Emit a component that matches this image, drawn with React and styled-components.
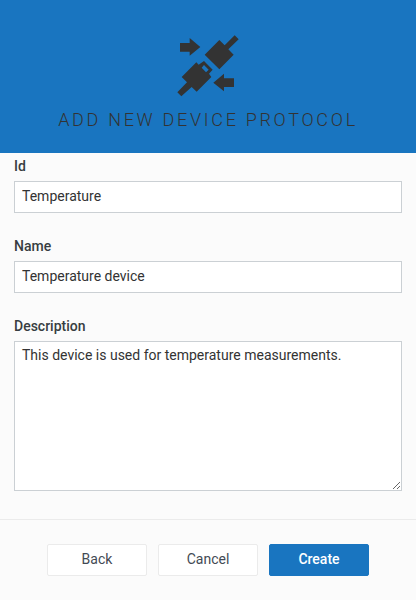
import React from "react";
import styled, { createGlobalStyle, css } from "styled-components";

const GlobalStyle = createGlobalStyle`
  *, *::before, *::after { box-sizing: border-box; }
  body {
    margin: 0;
    background: #fbfbfb;
    color: #373d41;
    font-family: Roboto, sans-serif;
    font-size: 14px;
    overflow: hidden;
  }
`;

const Dialog = styled.main`
  display: flex;
  flex-direction: column;
  height: 600px;
  background: #fbfbfb;
`;

const Header = styled.header`
  display: flex;
  flex-direction: column;
  align-items: center;
  height: 153px;
  padding-top: 28px;
  background: #1975c0;
`;

const ConnectorIcon = styled.svg`
  display: block;
  width: 80px;
  height: 75px;
  fill: #333;
`;

const Title = styled.h1`
  margin: 5px 0 0;
  font-size: 18px;
  font-weight: 300;
  line-height: 24px;
  letter-spacing: 2.7px;
  text-transform: uppercase;
  white-space: nowrap;
  color: #333;
`;

const Form = styled.form`
  display: flex;
  flex: 1;
  flex-direction: column;
  gap: 24px;
  padding: 4px 14px 0;
`;

const Field = styled.label`
  display: flex;
  flex-direction: column;
`;

const Label = styled.span`
  height: 24px;
  font-weight: 500;
  line-height: 18px;
`;

const control = css`
  display: block;
  width: 100%;
  margin: 0;
  padding: 4px 7px 6px;
  border: 1px solid #cbd0d4;
  border-radius: 0;
  outline: none;
  background: #fff;
  color: #333;
  font: 400 14px/20px Roboto, sans-serif;
`;

const Input = styled.input`
  ${control}
  height: 32px;
`;

const TextArea = styled.textarea`
  ${control}
  height: 150px;
  padding-top: 3px;
  resize: both;
`;

const Footer = styled.footer`
  display: flex;
  justify-content: center;
  gap: 11px;
  height: 81px;
  padding-top: 24px;
  border-top: 1px solid #ebebeb;
`;

const Button = styled.button`
  width: 100px;
  height: 32px;
  padding: 0 0 2px;
  border: 1px solid ${(p) => (p.$primary ? "#1975c0" : "#ebebeb")};
  border-radius: 2px;
  background: ${(p) => (p.$primary ? "#1975c0" : "#fff")};
  color: ${(p) => (p.$primary ? "#fff" : "#434a54")};
  font: ${(p) => (p.$primary ? 500 : 400)} 14px/20px Roboto, sans-serif;
`;

export default function App() {
  return (
    <>
      <GlobalStyle />
      <Dialog>
        <Header>
          <ConnectorIcon viewBox="0 0 240 225" aria-hidden="true">
            <path d="M36 45H65V30L97 57L65 83V71H36Z" />
            <path d="M154 36L170 52L200 22L212 34L181 64L197 80L154 124L110 80Z" />
            <path
              fillRule="evenodd"
              d="M41 147L85 103L92 110L108 99L134 125L123 137L130 147L86 191L71 177L40 205L28 193L57 163ZM101 119L108 111L122 125L114 133Z"
            />
            <path d="M136 164L168 137V151H198V177H168V190Z" />
          </ConnectorIcon>
          <Title>Add new device protocol</Title>
        </Header>
        <Form>
          <Field>
            <Label>Id</Label>
            <Input defaultValue="Temperature" />
          </Field>
          <Field>
            <Label>Name</Label>
            <Input defaultValue="Temperature device" />
          </Field>
          <Field>
            <Label>Description</Label>
            <TextArea defaultValue="This device is used for temperature measurements." />
          </Field>
        </Form>
        <Footer>
          <Button type="button">Back</Button>
          <Button type="button">Cancel</Button>
          <Button type="button" $primary>Create</Button>
        </Footer>
      </Dialog>
    </>
  );
}
